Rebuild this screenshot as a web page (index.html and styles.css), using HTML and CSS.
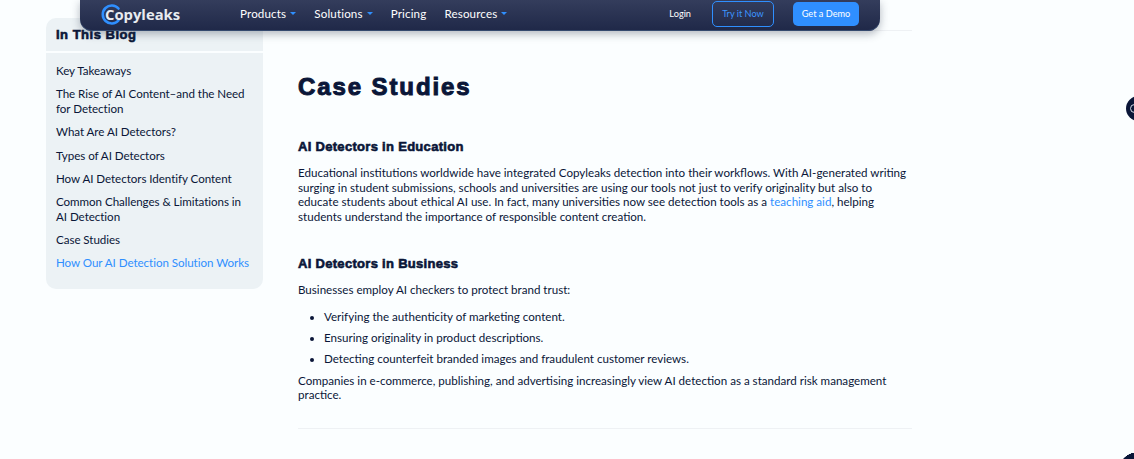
FILE: index.html
```html
<!DOCTYPE html>
<html>
<head>
    <title>Case Studies - Copyleaks</title>
    <link rel="stylesheet" href="styles.css">
</head>
<body>
    <header class="navbar">
        <a class="logo">
            <svg class="logo-ring" width="23" height="21" viewBox="0 0 23 21">
                <path d="M17.5 4.5A9 9 0 1 0 17.5 16.5" fill="none" stroke="#2f8fff" stroke-width="2.6" stroke-linecap="round"/>
            </svg>
            <span class="logo-text">Copyleaks</span>
        </a>
        <nav class="nav-links">
            <a>Products<i class="caret"></i></a>
            <a>Solutions<i class="caret"></i></a>
            <a>Pricing</a>
            <a>Resources<i class="caret"></i></a>
        </nav>
        <div class="nav-actions">
            <a class="login">Login</a>
            <a class="btn btn-outline">Try it Now</a>
            <a class="btn btn-solid">Get a Demo</a>
        </div>
    </header>

    <div class="page">
        <aside class="toc">
            <div class="toc-title">In This Blog</div>
            <ul class="toc-list">
                <li>Key Takeaways</li>
                <li>The Rise of AI Content–and the Need for Detection</li>
                <li>What Are AI Detectors?</li>
                <li>Types of AI Detectors</li>
                <li>How AI Detectors Identify Content</li>
                <li>Common Challenges &amp; Limitations in AI Detection</li>
                <li>Case Studies</li>
                <li class="active">How Our AI Detection Solution Works</li>
            </ul>
        </aside>

        <main class="article">
            <h2>Case Studies</h2>

            <h3>AI Detectors in Education</h3>
            <p>Educational institutions worldwide have integrated Copyleaks detection into their workflows. With AI-generated writing surging in student submissions, schools and universities are using our tools not just to verify originality but also to educate students about ethical AI use. In fact, many universities now see detection tools as a <a class="link">teaching aid</a>, helping students understand the importance of responsible content creation.</p>

            <h3 class="second">AI Detectors in Business</h3>
            <p>Businesses employ AI checkers to protect brand trust:</p>
            <ul class="points">
                <li>Verifying the authenticity of marketing content.</li>
                <li>Ensuring originality in product descriptions.</li>
                <li>Detecting counterfeit branded images and fraudulent customer reviews.</li>
            </ul>
            <p>Companies in e-commerce, publishing, and advertising increasingly view AI detection as a standard risk management practice.</p>
        </main>
    </div>

    <div class="float-badge"><span class="badge-circle"><span class="badge-ring"></span></span></div>
    <div class="float-chat"></div>
</body>
</html>
```

FILE: styles.css
```css
body {
    margin: 0;
    height: 459px;
    overflow: hidden;
    position: relative;
    background-color: #fbfeff;
    color: #0a1638;
    font-family: Lato, "Open Sans", sans-serif;
    font-size: 11.6px;
    line-height: 14.7px;
}

/* top bar */
.navbar {
    position: absolute;
    top: 0;
    left: 80px;
    width: 800px;
    height: 31px;
    z-index: 5;
    display: flex;
    align-items: center;
    box-sizing: border-box;
    padding: 0 0 3px 21px;
    border-radius: 0 0 12px 12px;
    background: linear-gradient(#343d5c, #1f2848);
    box-shadow: inset 0 -1px 0 #34496e, 0 3px 8px rgba(40, 50, 70, 0.35);
    color: white;
}
.logo {
    display: flex;
    align-items: center;
    width: 139px;
}
.logo-ring {
    flex-shrink: 0;
}
.logo-text {
    font-family: "Open Sans", sans-serif;
    font-weight: 700;
    font-size: 14.8px;
    margin-left: -19px;
    color: #e8ebf0;
}
.nav-links {
    display: flex;
    gap: 18px;
    font-size: 11.6px;
    letter-spacing: 0.15px;
}
.nav-links a {
    display: flex;
    align-items: center;
}
.caret {
    margin-left: 4px;
    border-left: 3px solid transparent;
    border-right: 3px solid transparent;
    border-top: 3px solid #2f8fff;
}
.nav-actions {
    margin-left: auto;
    display: flex;
    align-items: center;
    font-size: 9.2px;
}
.login {
    margin-right: 21px;
    color: white;
}
.btn {
    display: flex;
    align-items: center;
    justify-content: center;
    box-sizing: border-box;
    border-radius: 5px;
}
.btn-outline {
    width: 62px;
    height: 26px;
    border: 1px solid #2f8fff;
    color: #3c95ff;
    margin-right: 19px;
}
.btn-solid {
    width: 66px;
    height: 24px;
    background-color: #2f8fff;
    color: white;
    margin-right: 21px;
}

/* page columns */
.page {
    display: flex;
    align-items: flex-start;
    padding: 18px 0 0 46px;
}
.toc {
    width: 217px;
    flex-shrink: 0;
    background-color: #ecf2f5;
    border-radius: 10px;
    overflow: hidden;
}
.toc-title {
    height: 35px;
    box-sizing: border-box;
    padding: 10px 10px 0;
    border-bottom: 2px solid #fbfeff;
    font-family: "Liberation Sans", Arial, sans-serif;
    font-weight: 700;
    font-size: 13px;
    letter-spacing: 0.5px;
    -webkit-text-stroke: 0.6px #0a1638;
}
.toc-list {
    list-style: none;
    margin: 0;
    padding: 10px 10px 19px;
    line-height: 15px;
    letter-spacing: -0.05px;
}
.toc-list li {
    margin-bottom: 8.2px;
}
.toc-list li:last-child {
    margin-bottom: 0;
}
.toc-list .active {
    color: #2f8fff;
}

/* article */
.article {
    width: 614px;
    margin-left: 35px;
    margin-top: 12px;
    border-top: 1px solid #eef1f4;
    border-bottom: 1px solid #eef1f4;
    padding-bottom: 25px;
}
h2, h3 {
    margin: 0;
    font-family: "Liberation Sans", Arial, sans-serif;
    font-weight: 700;
}
h2 {
    margin-top: 42px;
    font-size: 24px;
    line-height: 28px;
    letter-spacing: 1.9px;
    -webkit-text-stroke: 1px #0a1638;
}
h3 {
    margin-top: 38px;
    font-size: 13px;
    line-height: 16px;
    letter-spacing: 0.3px;
    -webkit-text-stroke: 0.6px #0a1638;
}
h3.second {
    margin-top: 31px;
}
p {
    margin: 11px 0 0;
}
.link {
    color: #2f8fff;
}
.points {
    margin: 12px 0 0;
    padding-left: 26px;
}
.points li {
    margin-bottom: 6.3px;
}
.points + p {
    margin-top: 7.3px;
}

/* floating widgets cut by the window edge */
.float-badge {
    position: absolute;
    left: 1126px;
    top: 96px;
    width: 8px;
    height: 25px;
    overflow: hidden;
}
.badge-circle {
    display: flex;
    align-items: center;
    width: 25px;
    height: 25px;
    border-radius: 50%;
    background-color: #0a1638;
}
.badge-ring {
    box-sizing: border-box;
    width: 9px;
    height: 9px;
    margin-left: 4px;
    border-radius: 50%;
    border: 1.5px solid #d5dbe6;
}
.float-chat {
    position: absolute;
    left: 1118px;
    top: 452px;
    width: 16px;
    height: 7px;
    background: radial-gradient(circle 20px at 20px 20px, #0a1638 98%, transparent);
}
```
